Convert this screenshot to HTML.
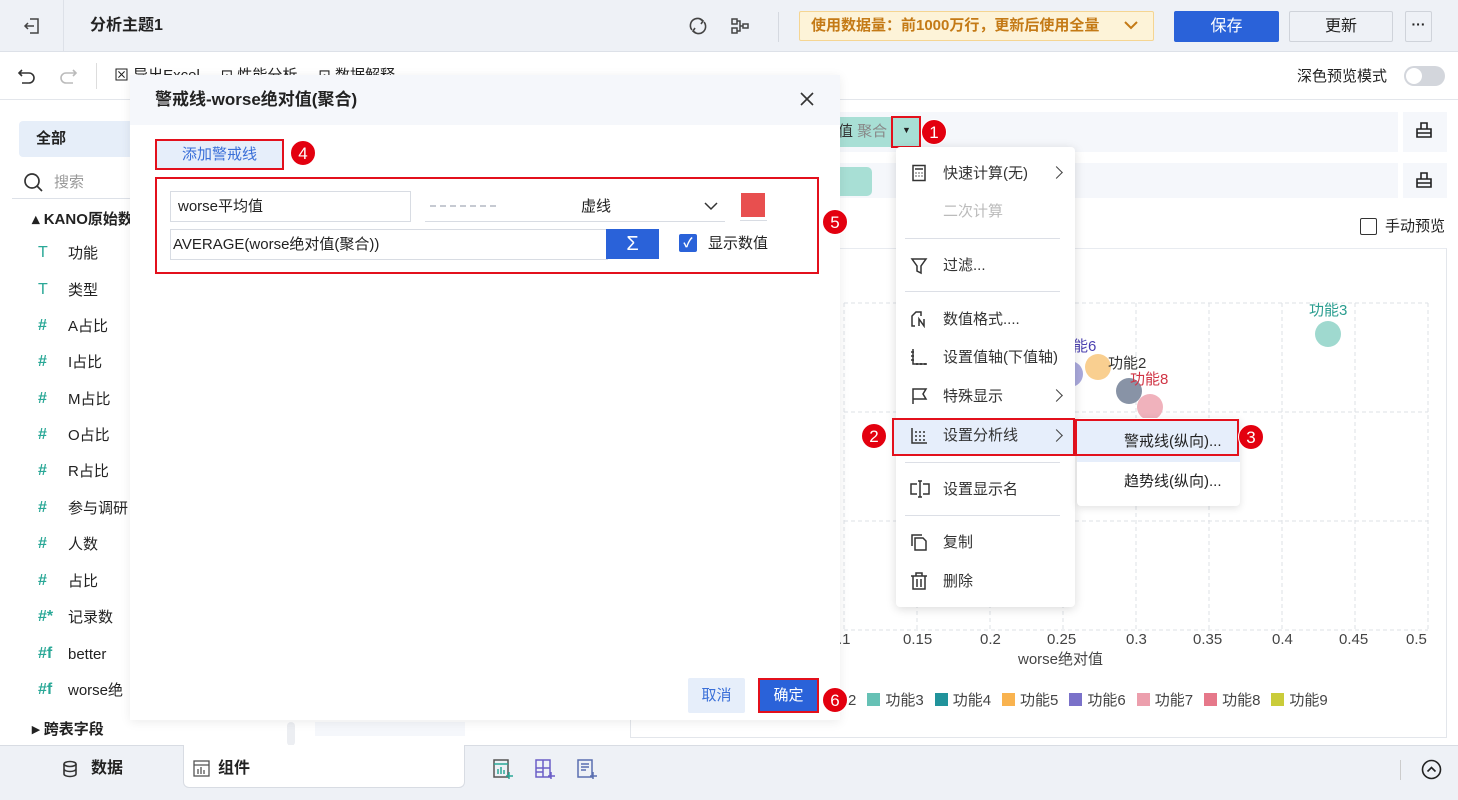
<!DOCTYPE html>
<html><head><meta charset="utf-8"><style>
*{box-sizing:border-box;margin:0;padding:0}
body{width:1458px;height:800px;overflow:hidden;position:relative;background:#fff;font-family:"Liberation Sans","Noto Sans CJK SC",sans-serif;font-size:14px;color:#222}
.a{position:absolute}
.t{position:absolute;white-space:nowrap;line-height:1}
.badge{position:absolute;width:26px;height:26px;border-radius:50%;background:#e3000f;color:#fff;font-size:17px;text-align:center;line-height:26px;border:1px solid #fff;}
.rb{position:absolute;border:2px solid #e3101c}
.hash{color:#2aa897;font-size:16px;font-weight:bold}
.sep{position:absolute;left:905px;width:155px;height:1px;background:#dcdfe6}
.mi{position:absolute;left:943px;font-size:15px;color:#333;white-space:nowrap;line-height:1}
.arr{position:absolute;left:1052px;width:9px;height:9px;border-right:1.5px solid #444;border-top:1.5px solid #444;transform:rotate(45deg)}
.sw{display:inline-block;width:13px;height:13px;vertical-align:-1px;margin:0 5px 0 11px}
.ic{position:absolute;left:910px}
</style></head><body>
<!-- top bar -->
<div class="a" style="left:0;top:0;width:1458px;height:52px;background:#eef1f6;border-bottom:1px solid #dde1e8"></div>
<svg class="a" style="left:22px;top:16px" width="20" height="20" viewBox="0 0 20 20" fill="none" stroke="#444" stroke-width="1.5"><path d="M8 3h8v14H8M3 10h9M6 7l-3 3 3 3"/></svg>
<div class="a" style="left:63px;top:0;width:1px;height:52px;background:#dde1e8"></div>
<div class="t" style="left:90px;top:18px;font-size:16px;font-weight:bold">分析主题1</div>
<svg class="a" style="left:688px;top:16px" width="20" height="20" viewBox="0 0 20 20" fill="none" stroke="#444" stroke-width="1.6"><path d="M15 5A7 7 0 0 0 4 14M5 15a7 7 0 0 0 11-9"/><path d="M12 3l3 2-2 3M8 17l-3-2 2-3"/></svg>
<svg class="a" style="left:730px;top:16px" width="20" height="20" viewBox="0 0 20 20" fill="none" stroke="#444" stroke-width="1.5"><rect x="2" y="3" width="5" height="5"/><rect x="2" y="12" width="5" height="5"/><rect x="13" y="8" width="5" height="4"/><path d="M7 5h3v10H7M10 10h3"/></svg>
<div class="a" style="left:778px;top:12px;width:1px;height:30px;background:#d5d9e0"></div>
<div class="a" style="left:799px;top:11px;width:355px;height:30px;background:#fdf3d8;border:1px solid #f5d592;border-radius:2px"></div>
<div class="t" style="left:811px;top:18px;font-size:15px;color:#c47a16;font-weight:bold">使用数据量：前1000万行，更新后使用全量</div>
<svg class="a" style="left:1123px;top:18px" width="16" height="14" viewBox="0 0 16 14" fill="none" stroke="#c47a16" stroke-width="2"><path d="M2 4l6 6 6-6"/></svg>
<div class="a" style="left:1174px;top:11px;width:105px;height:31px;background:#2a62d9;border-radius:2px;color:#fff;font-size:16px;text-align:center;line-height:31px">保存</div>
<div class="a" style="left:1289px;top:11px;width:104px;height:31px;background:#eef1f6;border:1px solid #cfd3da;border-radius:2px;font-size:16px;text-align:center;line-height:29px">更新</div>
<div class="a" style="left:1405px;top:11px;width:27px;height:31px;border:1px solid #cfd3da;border-radius:2px;text-align:center;line-height:24px;font-weight:bold">···</div>
<!-- toolbar -->
<div class="a" style="left:0;top:99px;width:1458px;height:1px;background:#e3e6eb"></div>
<svg class="a" style="left:17px;top:66px" width="20" height="20" viewBox="0 0 20 20" fill="none" stroke="#333" stroke-width="1.6"><path d="M5 4L2 7l3 3M2 7h10a5 5 0 0 1 0 10H5"/></svg>
<svg class="a" style="left:58px;top:66px" width="20" height="20" viewBox="0 0 20 20" fill="none" stroke="#bbb" stroke-width="1.6"><path d="M15 4l3 3-3 3M18 7H8a5 5 0 0 0 0 10h7"/></svg>
<div class="a" style="left:96px;top:63px;width:1px;height:26px;background:#ddd"></div>
<div class="t" style="left:114px;top:68px;font-size:15px">⊠ 导出Excel&nbsp;&nbsp;&nbsp;&nbsp;&nbsp;⊡ 性能分析&nbsp;&nbsp;&nbsp;&nbsp;&nbsp;⊡ 数据解释</div>
<div class="t" style="left:1297px;top:69px;font-size:15px">深色预览模式</div>
<div class="a" style="left:1404px;top:66px;width:41px;height:20px;border-radius:10px;background:#d3d6dc"></div>
<div class="a" style="left:1406px;top:68px;width:16px;height:16px;border-radius:8px;background:#fff"></div>
<!-- left panel -->
<div class="a" style="left:19px;top:121px;width:115px;height:36px;background:#e6eef9;border-radius:4px"></div>
<div class="t" style="left:36px;top:131px;font-size:15px;font-weight:bold">全部</div>
<svg class="a" style="left:23px;top:172px" width="22" height="22" viewBox="0 0 22 22" fill="none" stroke="#333" stroke-width="1.7"><circle cx="9" cy="9" r="7"/><path d="M14 14l5 5"/></svg>
<div class="t" style="left:54px;top:175px;font-size:15px;color:#999">搜索</div>
<div class="a" style="left:12px;top:198px;width:118px;height:1px;background:#dde1e8"></div>
<div class="t" style="left:32px;top:212px;font-size:15px;font-weight:bold">▴ KANO原始数</div>
<div class="t" style="left:38px;top:245px;font-size:16px;color:#2aa897">T</div><div class="t" style="left:68px;top:246px;font-size:15px">功能</div>
<div class="t" style="left:38px;top:282px;font-size:16px;color:#2aa897">T</div><div class="t" style="left:68px;top:283px;font-size:15px">类型</div>
<div class="t hash" style="left:38px;top:318px">#</div><div class="t" style="left:68px;top:319px;font-size:15px">A占比</div>
<div class="t hash" style="left:38px;top:354px">#</div><div class="t" style="left:68px;top:355px;font-size:15px">I占比</div>
<div class="t hash" style="left:38px;top:391px">#</div><div class="t" style="left:68px;top:392px;font-size:15px">M占比</div>
<div class="t hash" style="left:38px;top:427px">#</div><div class="t" style="left:68px;top:428px;font-size:15px">O占比</div>
<div class="t hash" style="left:38px;top:463px">#</div><div class="t" style="left:68px;top:464px;font-size:15px">R占比</div>
<div class="t hash" style="left:38px;top:500px">#</div><div class="t" style="left:68px;top:501px;font-size:15px">参与调研</div>
<div class="t hash" style="left:38px;top:536px">#</div><div class="t" style="left:68px;top:537px;font-size:15px">人数</div>
<div class="t hash" style="left:38px;top:573px">#</div><div class="t" style="left:68px;top:574px;font-size:15px">占比</div>
<div class="t hash" style="left:38px;top:609px">#*</div><div class="t" style="left:68px;top:610px;font-size:15px">记录数</div>
<div class="t hash" style="left:38px;top:646px">#f</div><div class="t" style="left:68px;top:647px;font-size:15px">better</div>
<div class="t hash" style="left:38px;top:682px">#f</div><div class="t" style="left:68px;top:683px;font-size:15px">worse绝</div>
<div class="t" style="left:32px;top:722px;font-size:15px;font-weight:bold">▸ 跨表字段</div>
<div class="a" style="left:287px;top:722px;width:8px;height:24px;border-radius:4px;background:#eceef2"></div>
<div class="a" style="left:315px;top:722px;width:150px;height:14px;background:#f5f7fb"></div>
<!-- bottom bar -->
<div class="a" style="left:0;top:745px;width:1458px;height:55px;background:#eef1f6;border-top:1px solid #d8dce3"></div>
<div class="a" style="left:183px;top:745px;width:282px;height:43px;background:#fff;border:1px solid #d8dce3;border-top:none;border-radius:0 0 6px 6px"></div>
<svg class="a" style="left:62px;top:760px" width="16" height="18" viewBox="0 0 16 18" fill="none" stroke="#333" stroke-width="1.6"><ellipse cx="8" cy="4" rx="6" ry="2.5"/><path d="M2 4v10c0 1.5 3 2.5 6 2.5s6-1 6-2.5V4M2 9c0 1.5 3 2.5 6 2.5s6-1 6-2.5"/></svg>
<div class="t" style="left:91px;top:761px;font-size:16px;font-weight:bold">数据</div>
<svg class="a" style="left:193px;top:760px" width="17" height="17" viewBox="0 0 17 17" fill="none" stroke="#555" stroke-width="1.3"><rect x="1" y="1" width="15" height="15"/><path d="M1 5h15M5 14V9M8 14V7M11 14v-4"/></svg>
<div class="t" style="left:218px;top:761px;font-size:16px;font-weight:bold">组件</div>
<svg class="a" style="left:492px;top:758px" width="22" height="22" viewBox="0 0 22 22" fill="none" stroke-width="1.5"><rect x="2" y="2" width="14" height="17" stroke="#555"/><path d="M2 6h14M6 16v-5M9 16v-7M12 16v-4" stroke="#2aa897"/><path d="M17 14v7M14 18h7" stroke="#2aa897"/></svg>
<svg class="a" style="left:534px;top:758px" width="22" height="22" viewBox="0 0 22 22" fill="none" stroke-width="1.5"><rect x="2" y="2" width="14" height="17" stroke="#6b5fc7"/><path d="M2 10h14M9 2v17M2 14h7" stroke="#6b5fc7"/><path d="M17 14v7M14 18h7" stroke="#6b5fc7"/></svg>
<svg class="a" style="left:576px;top:758px" width="22" height="22" viewBox="0 0 22 22" fill="none" stroke-width="1.5"><rect x="2" y="2" width="14" height="17" stroke="#5a6fb0"/><path d="M5 6h8M5 9h8M5 12h5" stroke="#5a6fb0"/><path d="M17 14v7M14 18h7" stroke="#5a6fb0"/></svg>
<div class="a" style="left:1400px;top:760px;width:1px;height:20px;background:#ccc"></div>
<svg class="a" style="left:1421px;top:759px" width="21" height="21" viewBox="0 0 21 21" fill="none" stroke="#222" stroke-width="1.6"><circle cx="10.5" cy="10.5" r="9"/><path d="M6.5 12.5l4-4 4 4"/></svg>
<!-- right area -->
<div class="a" style="left:840px;top:112px;width:558px;height:40px;background:#f5f7fb"></div>
<div class="a" style="left:1403px;top:112px;width:44px;height:40px;background:#f5f7fb"></div>
<div class="a" style="left:830px;top:117px;width:90px;height:30px;background:#a8dfd5"></div>
<div class="t" style="left:838px;top:124px;font-size:15px;color:#333">值 <span style="color:#888">聚合</span></div>
<div class="t" style="left:902px;top:126px;font-size:9px">▼</div>
<div class="rb" style="left:891px;top:116px;width:30px;height:32px"></div>
<div class="badge" style="left:921px;top:119px">1</div>
<div class="a" style="left:840px;top:163px;width:558px;height:35px;background:#f5f7fb"></div>
<div class="a" style="left:1403px;top:163px;width:44px;height:35px;background:#f5f7fb"></div>
<div class="a" style="left:830px;top:167px;width:42px;height:29px;background:#a8dfd5;border-radius:0 5px 5px 0"></div>
<svg class="a" style="left:1415px;top:121px" width="18" height="18" viewBox="0 0 18 18" fill="none" stroke="#222" stroke-width="1.6"><path d="M6 8V2h6v6M2 8h14v8H2zM2 12h14"/></svg>
<svg class="a" style="left:1415px;top:171px" width="18" height="18" viewBox="0 0 18 18" fill="none" stroke="#222" stroke-width="1.6"><path d="M6 8V2h6v6M2 8h14v8H2zM2 12h14"/></svg>
<div class="a" style="left:1360px;top:218px;width:17px;height:17px;border:1.5px solid #333;border-radius:2px"></div>
<div class="t" style="left:1385px;top:219px;font-size:15px">手动预览</div>
<div class="a" style="left:630px;top:248px;width:817px;height:490px;border:1.5px solid #e3e6eb;border-top-color:#e8ebf0"></div>
<svg class="a" style="left:830px;top:290px" width="610" height="350">
<g stroke="#dde1e6" stroke-dasharray="4 3" fill="none">
<path d="M14 13V340M87 13V340M160 13V340M233 13V340M306 13V340M379 13V340M452 13V340M525 13V340M598 13V340"/>
<path d="M14 13H598M14 122H598M14 231H598M14 340H598"/>
</g>
<circle cx="498" cy="44" r="13" fill="#9fd9cf"/>
<circle cx="240" cy="84" r="13" fill="#aaa9dc"/>
<circle cx="268" cy="77" r="13" fill="#f9cf90"/>
<circle cx="299" cy="101" r="13" fill="#8893a6"/>
<circle cx="320" cy="117" r="13" fill="#f0b2bc"/>
</svg>
<div class="t" style="left:1309px;top:303px;font-size:15px;color:#2a9d8f">功能3</div>
<div class="t" style="left:1073px;top:339px;font-size:15px;color:#4a3fb0">能6</div>
<div class="t" style="left:1108px;top:356px;font-size:15px;color:#333">功能2</div>
<div class="t" style="left:1130px;top:372px;font-size:15px;color:#d03545">功能8</div>
<div class="t" style="left:838px;top:632px;font-size:15px;color:#444">.1</div>
<div class="t" style="left:903px;top:632px;font-size:15px;color:#444">0.15</div>
<div class="t" style="left:980px;top:632px;font-size:15px;color:#444">0.2</div>
<div class="t" style="left:1047px;top:632px;font-size:15px;color:#444">0.25</div>
<div class="t" style="left:1126px;top:632px;font-size:15px;color:#444">0.3</div>
<div class="t" style="left:1193px;top:632px;font-size:15px;color:#444">0.35</div>
<div class="t" style="left:1272px;top:632px;font-size:15px;color:#444">0.4</div>
<div class="t" style="left:1339px;top:632px;font-size:15px;color:#444">0.45</div>
<div class="t" style="left:1406px;top:632px;font-size:15px;color:#444">0.5</div>
<div class="t" style="left:1018px;top:652px;font-size:15px;color:#444">worse绝对值</div>
<div class="t" style="left:848px;top:693px;font-size:15px;color:#444">2<span class="sw" style="background:#66c1b5"></span>功能3<span class="sw" style="background:#21939b"></span>功能4<span class="sw" style="background:#f9b34f"></span>功能5<span class="sw" style="background:#7a71c9"></span>功能6<span class="sw" style="background:#ec9fad"></span>功能7<span class="sw" style="background:#e6788a"></span>功能8<span class="sw" style="background:#cacc3a"></span>功能9</div>
<!-- context menu -->
<div class="a" style="left:896px;top:147px;width:179px;height:460px;background:#fff;border-radius:4px;box-shadow:0 2px 10px rgba(0,0,0,.15)"></div>
<svg class="ic" style="top:164px" width="18" height="18" viewBox="0 0 18 18" fill="none" stroke="#333" stroke-width="1.5"><rect x="3" y="1.5" width="12" height="15"/><path d="M5 5h8M5.5 9h1M8.5 9h1M11.5 9h1M5.5 12h1M8.5 12h1M11.5 12h1"/></svg>
<div class="mi" style="top:166px">快速计算(无)</div><div class="arr" style="top:168px"></div>
<div class="mi" style="top:204px;color:#bbb">二次计算</div>
<div class="sep" style="top:238px"></div>
<svg class="ic" style="top:257px" width="18" height="18" viewBox="0 0 18 18" fill="none" stroke="#333" stroke-width="1.5"><path d="M2 2h14l-5 7v7l-4-2V9z"/></svg>
<div class="mi" style="top:258px">过滤...</div>
<div class="sep" style="top:291px"></div>
<svg class="ic" style="top:310px" width="18" height="18" viewBox="0 0 18 18" fill="none" stroke="#333" stroke-width="1.5"><path d="M5 16H2V6l4-4h5v4M9 16V9l5 7V9"/></svg>
<div class="mi" style="top:312px">数值格式....</div>
<svg class="ic" style="top:348px" width="18" height="18" viewBox="0 0 18 18" fill="none" stroke="#333" stroke-width="1.5"><path d="M3 1v15h14M1 4h3M1 8h3M1 12h3M7 17v-2M11 17v-2M15 17v-2"/></svg>
<div class="mi" style="top:350px">设置值轴(下值轴)</div>
<svg class="ic" style="top:387px" width="18" height="18" viewBox="0 0 18 18" fill="none" stroke="#333" stroke-width="1.5"><path d="M3 17V2h13l-3 5 3 5H3"/></svg>
<div class="mi" style="top:389px">特殊显示</div><div class="arr" style="top:391px"></div>
<div class="a" style="left:893px;top:418px;width:182px;height:37px;background:#e6eefb"></div>
<div class="rb" style="left:892px;top:418px;width:183px;height:38px"></div>
<svg class="ic" style="top:427px" width="18" height="18" viewBox="0 0 18 18" fill="none" stroke="#333" stroke-width="1.5"><path d="M2 1v15h15"/><path d="M5 5h11M5 9h11M5 13h11" stroke-dasharray="2 2"/></svg>
<div class="mi" style="top:428px">设置分析线</div><div class="arr" style="top:431px"></div>
<div class="badge" style="left:861px;top:423px">2</div>
<div class="sep" style="top:462px"></div>
<svg class="ic" style="top:480px" width="20" height="18" viewBox="0 0 20 18" fill="none" stroke="#333" stroke-width="1.5"><path d="M7 4H1v10h6M13 4h6v10h-6M10 1v16M8 1h4M8 17h4"/></svg>
<div class="mi" style="top:482px">设置显示名</div>
<div class="sep" style="top:515px"></div>
<svg class="ic" style="top:533px" width="18" height="18" viewBox="0 0 18 18" fill="none" stroke="#333" stroke-width="1.5"><path d="M2 13V2h10"/><path d="M5 5h8l3 3v9H5z"/></svg>
<div class="mi" style="top:535px">复制</div>
<svg class="ic" style="top:572px" width="18" height="18" viewBox="0 0 18 18" fill="none" stroke="#333" stroke-width="1.5"><path d="M1 4h16M6 4V1h6v3M3 4v13h12V4M7 7v8M11 7v8"/></svg>
<div class="mi" style="top:574px">删除</div>
<!-- submenu -->
<div class="a" style="left:1077px;top:418px;width:163px;height:88px;background:#fff;border-radius:4px;box-shadow:0 2px 8px rgba(0,0,0,.12)"></div>
<div class="a" style="left:1077px;top:419px;width:163px;height:43px;background:#e6eefb"></div>
<div class="rb" style="left:1075px;top:419px;width:164px;height:37px"></div>
<div class="t" style="left:1124px;top:434px;font-size:15px">警戒线(纵向)...</div>
<div class="t" style="left:1124px;top:474px;font-size:15px">趋势线(纵向)...</div>
<div class="badge" style="left:1238px;top:424px">3</div>
<!-- dialog -->
<div class="a" style="left:130px;top:75px;width:710px;height:645px;background:#fff;box-shadow:0 2px 10px rgba(0,0,0,.08)"></div>
<div class="a" style="left:130px;top:75px;width:710px;height:50px;background:#f5f7fb"></div>
<div class="t" style="left:155px;top:91px;font-size:17px;font-weight:bold">警戒线-worse绝对值(聚合)</div>
<svg class="a" style="left:799px;top:91px" width="16" height="16" viewBox="0 0 16 16" stroke="#333" stroke-width="1.6"><path d="M2 2l12 12M14 2L2 14"/></svg>
<div class="a" style="left:155px;top:139px;width:129px;height:31px;background:#e6eefa;border:2px solid #e3101c;color:#3a6fd8;font-size:15px;text-align:center;line-height:27px">添加警戒线</div>
<div class="badge" style="left:290px;top:140px">4</div>
<div class="rb" style="left:155px;top:177px;width:664px;height:97px"></div>
<div class="a" style="left:170px;top:191px;width:241px;height:31px;border:1px solid #d8dce3"></div>
<div class="t" style="left:178px;top:199px;font-size:15px">worse平均值</div>
<div class="a" style="left:425px;top:221px;width:300px;height:1px;background:#d8dce3"></div>
<div class="a" style="left:430px;top:205px;width:66px;height:0;border-top:2px dashed #c6cad2"></div>
<div class="t" style="left:581px;top:199px;font-size:15px">虚线</div>
<svg class="a" style="left:703px;top:200px" width="16" height="12" viewBox="0 0 16 12" fill="none" stroke="#333" stroke-width="1.5"><path d="M2 3l6 6 6-6"/></svg>
<div class="a" style="left:741px;top:193px;width:24px;height:24px;background:#e84f4f"></div>
<div class="a" style="left:740px;top:220px;width:27px;height:1px;background:#d8dce3"></div>
<div class="a" style="left:170px;top:229px;width:438px;height:31px;border:1px solid #d8dce3"></div>
<div class="t" style="left:173px;top:237px;font-size:15px">AVERAGE(worse绝对值(聚合))</div>
<div class="a" style="left:606px;top:229px;width:53px;height:30px;background:#2a62d9;color:#fff;font-size:20px;text-align:center;line-height:30px">Σ</div>
<div class="a" style="left:679px;top:234px;width:18px;height:18px;background:#2a62d9;border-radius:2px;color:#fff;font-size:13px;text-align:center;line-height:18px;font-weight:bold">✓</div>
<div class="t" style="left:708px;top:236px;font-size:15px">显示数值</div>
<div class="badge" style="left:822px;top:209px">5</div>
<div class="a" style="left:688px;top:678px;width:57px;height:35px;background:#e6eefa;border-radius:2px;color:#3a6fd8;font-size:15px;text-align:center;line-height:35px">取消</div>
<div class="a" style="left:758px;top:678px;width:61px;height:35px;background:#2a62d9;border:2px solid #e3101c;color:#fff;font-size:15px;text-align:center;line-height:31px">确定</div>
<div class="badge" style="left:822px;top:687px">6</div>
</body></html>
